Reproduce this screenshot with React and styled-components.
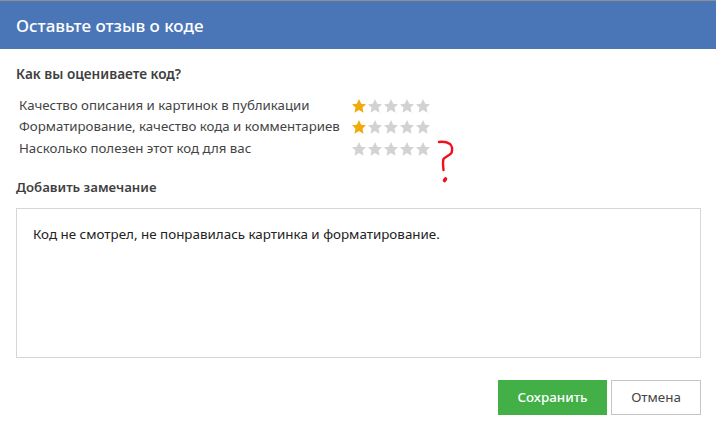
import React from 'react'
import styled, { createGlobalStyle } from 'styled-components'

const GlobalStyle = createGlobalStyle`
  html, body {
    margin: 0;
    padding: 0;
    background: #fff;
  }
  body {
    font-family: "Noto Sans", "Open Sans", sans-serif;
    color: #444;
  }
  * {
    box-sizing: border-box;
  }
`

const Modal = styled.div`
  position: relative;
  width: 716px;
  height: 429px;
  display: flex;
  flex-direction: column;
  overflow: hidden;
`

const Header = styled.header`
  height: 49px;
  flex: none;
  display: flex;
  align-items: center;
  padding: 0 16px;
  background: #4a76b8;
  border-top: 1px solid #8f8f8f;
  color: #fff;
  font-size: 17px;
  font-weight: 500;
`

const Body = styled.div`
  flex: 1;
  display: flex;
  flex-direction: column;
  padding: 16px 15px 0 16px;
`

const Heading = styled.h3`
  margin: 0;
  font-size: ${({ $size }) => $size || '13.6px'};
  line-height: 18px;
  font-weight: 600;
  color: #3f3f3f;
`

const RatingTable = styled.div`
  display: grid;
  grid-template-columns: 333px auto;
  grid-auto-rows: 21.5px;
  align-items: center;
  justify-content: start;
  margin: 11px 0 0 3px;
`

const RowLabel = styled.span`
  font-size: 13.25px;
  line-height: 18px;
  white-space: nowrap;
  color: #444;
`

const Stars = styled.span`
  display: flex;
  gap: 2px;
  margin-top: 1.5px;
`

const NoteHeading = styled(Heading)`
  margin-top: 19px;
`

const NoteBox = styled.div`
  height: 150px;
  margin-top: 12px;
  padding: 16px;
  border: 1px solid #d6d6d6;
  font-size: 13.4px;
  line-height: 18px;
  color: #222;
`

const Actions = styled.div`
  display: flex;
  justify-content: flex-end;
  gap: 4px;
  margin-top: 22px;
`

const Button = styled.button`
  width: ${({ $primary }) => ($primary ? '109px' : '90px')};
  height: 35px;
  padding: 0;
  border: ${({ $primary }) => ($primary ? 'none' : '1px solid #c4c4c4')};
  background: ${({ $primary }) => ($primary ? '#43b047' : '#fff')};
  color: ${({ $primary }) => ($primary ? '#fff' : '#444')};
  font-family: inherit;
  font-size: 13.4px;
  font-weight: ${({ $primary }) => ($primary ? 500 : 400)};
`

const Scribble = styled.svg`
  position: absolute;
  left: 436px;
  top: 139px;
`

const Star = ({ filled }) => (
  <svg width="14" height="14" viewBox="0 0 14 14">
    <path
      d="M7 0 L9.2 4.7 L14 5.2 L10.5 8.6 L11.5 13.8 L7 11.1 L2.5 13.8 L3.5 8.6 L0 5.2 L4.8 4.7 Z"
      fill={filled ? '#f0ab0a' : '#d2d2d2'}
    />
  </svg>
)

const ratings = [
  { label: 'Качество описания и картинок в публикации', value: 1 },
  { label: 'Форматирование, качество кода и комментариев', value: 1 },
  { label: 'Насколько полезен этот код для вас', value: 0 },
]

export default function App() {
  return (
    <Modal>
      <GlobalStyle />
      <Header>Оставьте отзыв о коде</Header>
      <Body>
        <Heading>Как вы оцениваете код?</Heading>
        <RatingTable>
          {ratings.map((row) => (
            <React.Fragment key={row.label}>
              <RowLabel>{row.label}</RowLabel>
              <Stars>
                {[1, 2, 3, 4, 5].map((n) => (
                  <Star key={n} filled={n <= row.value} />
                ))}
              </Stars>
            </React.Fragment>
          ))}
        </RatingTable>
        <NoteHeading $size="13.2px">Добавить замечание</NoteHeading>
        <NoteBox>Код не смотрел, не понравилась картинка и форматирование.</NoteBox>
        <Actions>
          <Button $primary>Сохранить</Button>
          <Button>Отмена</Button>
        </Actions>
      </Body>
      <Scribble width="20" height="46" viewBox="0 0 20 46" fill="none">
        <path
          d="M3 3 C7 2.5 11 3 14 5 C16 7 16.5 11 15.5 14 C13 17 9 18 7.5 20 C6.5 23 7 27 7.5 31"
          stroke="#f0101c"
          strokeWidth="2.4"
          strokeLinecap="round"
          strokeLinejoin="round"
        />
        <path d="M8.5 41.5 L9.5 40" stroke="#f0101c" strokeWidth="3.6" strokeLinecap="round" />
      </Scribble>
    </Modal>
  )
}
